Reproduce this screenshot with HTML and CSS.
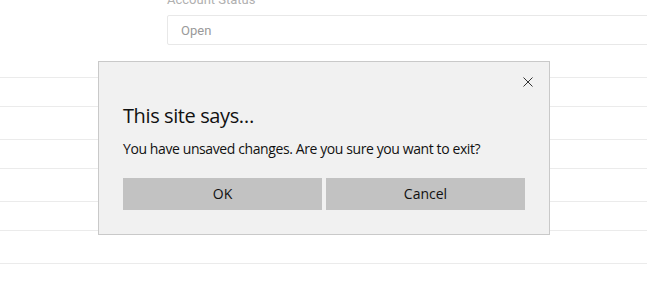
FILE: index.html
```html
<!DOCTYPE html>
<html lang="en">
<head>
<meta charset="utf-8">
<title>This site says…</title>
<link rel="stylesheet" href="styles.css">
</head>
<body>
<div class="page">
  <div class="field">
    <div class="field-label">Account Status</div>
    <div class="field-input">Open</div>
  </div>
  <div class="rows">
    <div class="row row-a"></div>
    <div class="row row-b"></div>
    <div class="row row-a"></div>
    <div class="row row-b"></div>
    <div class="row row-a"></div>
    <div class="row row-b"></div>
    <div class="row row-end"></div>
  </div>
</div>

<div class="dialog" role="dialog">
  <div class="dialog-head">
    <button class="close" aria-label="Close">
      <svg width="10" height="10" viewBox="0 0 10 10"><path d="M0.5 0.5 L9.5 9.5 M9.5 0.5 L0.5 9.5" stroke="#333" stroke-width="1" fill="none"/></svg>
    </button>
  </div>
  <div class="dialog-title">This site says…</div>
  <div class="dialog-msg">You have unsaved changes. Are you sure you want to exit?</div>
  <div class="dialog-actions">
    <button class="btn">OK</button>
    <button class="btn">Cancel</button>
  </div>
</div>
</body>
</html>
```
FILE: styles.css
```css
html, body {
  margin: 0;
  padding: 0;
  background: #ffffff;
  overflow: hidden;
}
body {
  width: 647px;
  height: 296px;
  position: relative;
  font-family: "Open Sans", "Noto Sans", sans-serif;
}
.page {
  display: flex;
  flex-direction: column;
}
.field {
  padding-left: 167px;
  margin-top: -8px;
  display: flex;
  flex-direction: column;
}
.field-label {
  font-family: Roboto, "Liberation Sans", sans-serif;
  font-size: 13px;
  line-height: 16px;
  color: #b0b0b0;
  height: 16px;
}
.field-input {
  margin-top: 7px;
  width: 520px;
  height: 30px;
  box-sizing: border-box;
  border: 1px solid #e8e8e8;
  border-radius: 2px;
  padding-left: 13px;
  font-family: Roboto, "Liberation Sans", sans-serif;
  font-size: 13px;
  line-height: 29px;
  color: #9a9a9a;
}
.rows {
  margin-top: 32px;
  display: flex;
  flex-direction: column;
}
.row {
  border-top: 1px solid #ebebeb;
  box-sizing: border-box;
}
.row-a { height: 29px; }
.row-b { height: 33px; }
.row-end { height: 1px; }

.dialog {
  position: absolute;
  left: 98px;
  top: 61px;
  width: 452px;
  box-sizing: border-box;
  background: #f1f1f1;
  border: 1px solid #c9c9c9;
  padding: 0 24px 24px 24px;
  display: flex;
  flex-direction: column;
  color: #111;
}
.dialog-head {
  height: 40px;
  display: flex;
  justify-content: flex-end;
  align-items: flex-start;
  padding-top: 13px;
  box-sizing: border-box;
  margin-right: -10px;
}
.close {
  width: 14px;
  height: 14px;
  padding: 0;
  margin: 0;
  border: 0;
  background: transparent;
  display: flex;
  align-items: center;
  justify-content: center;
}
.dialog-title {
  font-size: 20px;
  line-height: 28px;
  color: #111;
  letter-spacing: -0.4px;
}
.dialog-msg {
  margin-top: 9px;
  font-size: 14px;
  line-height: 20px;
  color: #111;
  letter-spacing: -0.4px;
}
.dialog-actions {
  margin-top: 19px;
  display: flex;
  gap: 4px;
}
.btn {
  flex: 1;
  height: 32px;
  border: 0;
  margin: 0;
  padding: 0;
  background: #c2c2c2;
  font-family: "Open Sans", "Noto Sans", sans-serif;
  font-size: 14px;
  line-height: 32px;
  color: #111;
}
```
